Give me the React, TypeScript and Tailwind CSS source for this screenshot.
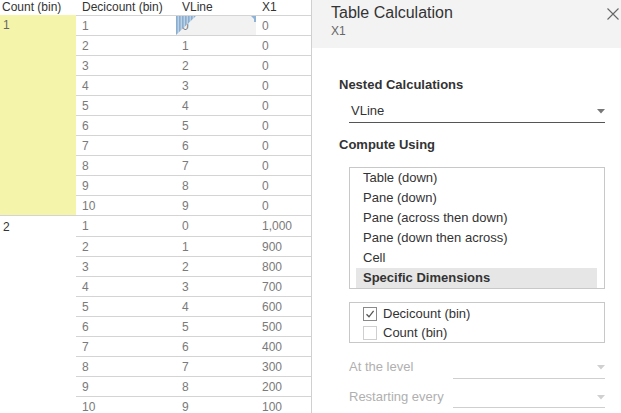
import React from "react";

const font = { fontFamily: '"Liberation Sans", Arial, sans-serif' };

const groups = [
  { count: "1", yellow: true, x1: ["0", "0", "0", "0", "0", "0", "0", "0", "0", "0"] },
  { count: "2", yellow: false, x1: ["1,000", "900", "800", "700", "600", "500", "400", "300", "200", "100"] },
];

function Hatch() {
  return (
    <svg className="absolute left-0 top-0" width="80" height="20" viewBox="0 0 80 20">
      <defs>
        <pattern id="st" x="0" y="0" width="3" height="3" patternUnits="userSpaceOnUse">
          <rect width="3" height="3" fill="#bcd1e6" />
          <rect width="1.6" height="3" fill="#8aaed0" />
        </pattern>
      </defs>
      <polygon points="0,0 20,0 0,19" fill="url(#st)" />
      <polygon points="75,0 80,0 80,5" fill="#8fb3d6" />
      <rect x="78" y="0" width="2" height="6" fill="#8fb3d6" />
    </svg>
  );
}

function Table() {
  return (
    <div className="w-[311px] shrink-0 text-[12px]" style={font}>
      <div className="flex h-[15px] leading-[15px] text-[#333]">
        <div className="w-[76px] pl-[2px]">Count (bin)</div>
        <div className="w-[100px] pl-[6px]">Decicount (bin)</div>
        <div className="w-[80px] pl-[6px]">VLine</div>
        <div className="flex-1 pl-[6px]">X1</div>
      </div>
      {groups.map((g, gi) => (
        <div key={gi} className={`flex ${gi === 1 ? "border-t border-[#d4d4d4]" : ""}`}>
          <div
            className={`w-[76px] pl-[3px] leading-[19px] ${
              g.yellow ? "bg-[#f4f4ab] text-[#666] pt-[1px]" : "bg-white text-[#333] pt-[2px]"
            }`}
          >
            {g.count}
          </div>
          <div className="flex-1">
            {g.x1.map((x, i) => (
              <div
                key={i}
                className={`flex h-[20px] leading-[19px] text-[#7a7a7a] ${
                  gi === 1 && i === 0 ? "h-[19px]" : "border-t border-[#d4d4d4]"
                }`}
              >
                <div className="w-[100px] pl-[6px] pt-[1px]">{i + 1}</div>
                <div
                  className={`relative w-[80px] pl-[6px] pt-[1px] ${
                    gi === 0 && i === 0 ? "bg-[#f2f2f2]" : ""
                  }`}
                >
                  {i}
                  {gi === 0 && i === 0 ? <Hatch /> : null}
                </div>
                <div className="flex-1 pl-[6px] pt-[1px]">{x}</div>
              </div>
            ))}
          </div>
        </div>
      ))}
    </div>
  );
}

function Arrow({ color }: { color: string }) {
  return (
    <svg width="8" height="5" viewBox="0 0 8 5">
      <polygon points="0,0 8,0 4,4.5" fill={color} />
    </svg>
  );
}

function Check({ checked }: { checked: boolean }) {
  return (
    <div
      className={`flex h-[14px] w-[14px] items-center justify-center border bg-white ${
        checked ? "border-[#8a8a8a]" : "border-[#cfcfcf]"
      }`}
    >
      {checked ? (
        <svg width="10" height="10" viewBox="0 0 10 10">
          <path d="M1.5 5.2 L4 7.8 L8.6 1.8" fill="none" stroke="#555" strokeWidth="1.3" />
        </svg>
      ) : null}
    </div>
  );
}

function Dialog() {
  const items = [
    "Table (down)",
    "Pane (down)",
    "Pane (across then down)",
    "Pane (down then across)",
    "Cell",
  ];
  return (
    <div className="flex h-full flex-1 flex-col border-l border-[#d0d0d0] bg-white" style={font}>
      <div className="relative h-[48px] bg-[#f3f3f3] pl-[19px] pt-[3px]">
        <div className="text-[16px] leading-[20px] text-[#333]">Table Calculation</div>
        <div className="text-[12px] leading-[16px] text-[#666]">X1</div>
        <svg className="absolute right-[2px] top-[8px]" width="12" height="12" viewBox="0 0 12 12">
          <path d="M0.5 0.5 L11.5 11.5 M11.5 0.5 L0.5 11.5" stroke="#666" strokeWidth="1.1" />
        </svg>
      </div>
      <div className="pl-[27px] pr-[16px]">
        <div className="mt-[28px] text-[13px] font-bold leading-[18px] text-[#333]">
          Nested Calculations
        </div>
        <div className="ml-[10px] flex h-[29px] items-start justify-between border-b border-[#555] pl-[2px] pt-[8px]">
          <span className="text-[13px] leading-[18px] text-[#333]">VLine</span>
          <span className="mt-[7px]">
            <Arrow color="#777" />
          </span>
        </div>
        <div className="mt-[13px] text-[13px] font-bold leading-[18px] text-[#333]">
          Compute Using
        </div>
        <div className="ml-[10px] mt-[13px] border border-[#c8c8c8] pl-[6px] pr-[7px] text-[13px] text-[#333]">
          {items.map((t) => (
            <div key={t} className="h-[20px] pl-[7px] leading-[20px]">
              {t}
            </div>
          ))}
          <div className="h-[20px] bg-[#e6e6e6] pl-[7px] font-bold leading-[20px]">
            Specific Dimensions
          </div>
        </div>
        <div className="ml-[10px] mt-[13px] border border-[#c8c8c8] pl-[13px] pt-[1px] text-[13px] text-[#333]">
          <div className="flex h-[19px] items-center gap-[6px]">
            <Check checked />
            <span className="leading-[19px]">Decicount (bin)</span>
          </div>
          <div className="flex h-[19px] items-center gap-[6px]">
            <Check checked={false} />
            <span className="leading-[19px]">Count (bin)</span>
          </div>
        </div>
        <div className="ml-[10px] mt-[15px] flex h-[21px] text-[13px] text-[#b0b0b0]">
          <div className="w-[104px] leading-[18px]">At the level</div>
          <div className="flex flex-1 items-start justify-end border-b border-[#cfcfcf] pt-[7px]">
            <Arrow color="#d0d0d0" />
          </div>
        </div>
        <div className="ml-[10px] mt-[9px] flex h-[20px] text-[13px] text-[#b0b0b0]">
          <div className="w-[104px] leading-[18px]">Restarting every</div>
          <div className="flex flex-1 items-start justify-end border-b border-[#cfcfcf] pt-[7px]">
            <Arrow color="#d0d0d0" />
          </div>
        </div>
      </div>
    </div>
  );
}

export default function App() {
  return (
    <div className="flex h-[413px] w-[621px] overflow-hidden bg-white">
      <Table />
      <Dialog />
    </div>
  );
}
